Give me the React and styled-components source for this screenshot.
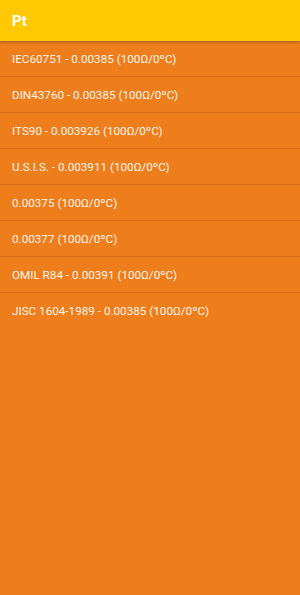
import React from "react";
import styled, { createGlobalStyle } from "styled-components";

const GlobalStyle = createGlobalStyle`
  html, body {
    margin: 0;
    padding: 0;
    height: 100%;
  }
  body {
    font-family: Roboto, "Noto Sans", sans-serif;
    background: #ee7e1b;
  }
  #root {
    min-height: 100%;
  }
`;

const items = [
  "IEC60751 - 0.00385 (100Ω/0ºC)",
  "DIN43760 - 0.00385 (100Ω/0ºC)",
  "ITS90 - 0.003926 (100Ω/0ºC)",
  "U.S.I.S. - 0.003911 (100Ω/0ºC)",
  "0.00375 (100Ω/0ºC)",
  "0.00377 (100Ω/0ºC)",
  "OMIL R84 - 0.00391 (100Ω/0ºC)",
  "JISC 1604-1989 - 0.00385 (100Ω/0ºC)",
];

const App = () => {
  return (
    <>
      <GlobalStyle />
      <Page>
        <Toolbar>Pt</Toolbar>
        <List>
          {items.map((item, ind) => (
            <Row key={ind} last={ind === items.length - 1}>
              {item}
            </Row>
          ))}
        </List>
      </Page>
    </>
  );
};

export default App;

const Page = styled.div`
  width: 300px;
  height: 595px;
  background: #ee7e1b;
  display: flex;
  flex-direction: column;
`;

const Toolbar = styled.div`
  height: 41px;
  display: flex;
  align-items: center;
  padding: 0 12px;
  background: #ffc800;
  color: #fff;
  font-size: 15px;
  font-weight: 700;
  box-shadow: 0 1px 3px rgba(0, 0, 0, 0.3);
  position: relative;
  z-index: 1;
  box-sizing: border-box;
`;

const List = styled.div`
  display: flex;
  flex-direction: column;
`;

const Row = styled.div`
  height: 35px;
  display: flex;
  align-items: center;
  padding: 0 12px;
  color: rgba(255, 255, 255, 0.95);
  font-size: 11.7px;
  border-bottom: 1px solid ${(p) => (p.last ? "transparent" : "#d86f17")};
`;
